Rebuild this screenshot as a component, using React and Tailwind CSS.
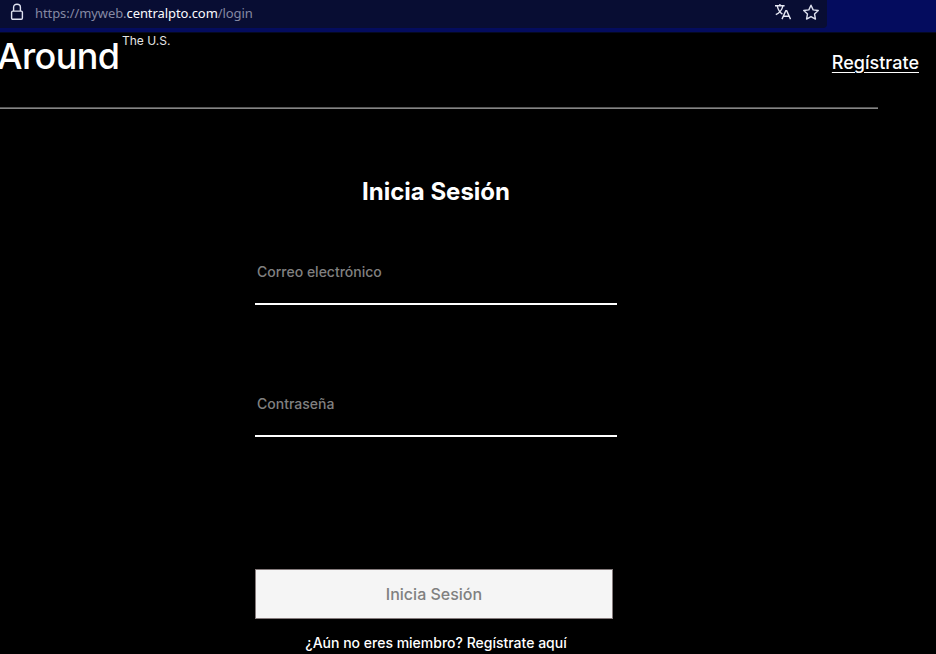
function LockIcon() {
  return (
    <svg className="h-[18px] w-[14px] shrink-0" viewBox="0 0 14 18" fill="none" stroke="#dfe2f0" strokeWidth="1.4">
      <rect x="1.6" y="8.1" width="10.8" height="8.2" rx="1.2" />
      <path d="M3.6 8V4.3C3.6 2.5 5 1.3 7 1.3s3.4 1.2 3.4 3V8" />
    </svg>
  );
}

function TranslateIcon() {
  return (
    <svg className="h-4 w-4 shrink-0" viewBox="0 0 16 16" fill="none" stroke="#e6e8f4" strokeWidth="1.4">
      <path d="M0 1.7h9.6M4.9 0v1.7M2.3 2.4C3.2 5.8 5 8.6 7.4 10.2M7.8 2.4C6.8 6.2 4.6 9 0.8 10.7" />
      <path d="M7 15.1L10.8 6.6h.9l3.8 8.5M8.5 12.2h5.6" />
    </svg>
  );
}

function StarIcon() {
  return (
    <svg className="h-[17px] w-[17px] shrink-0" viewBox="0 0 17 17" fill="none" stroke="#dfe2f0" strokeWidth="1.4" strokeLinejoin="round">
      <path d="M8 1.2l2.15 4.65 5.1.62-3.75 3.5.95 5.05L8 12.52l-4.45 2.5.95-5.05-3.75-3.5 5.1-.62z" />
    </svg>
  );
}

function AddressBar() {
  return (
    <div className="h-[33px] border-b border-[#050920] bg-[#040c5e]">
      <div className="flex h-7 w-[827px] items-start rounded-br bg-[#080d33] pl-[10px]">
        <div className="pt-[3px]"><LockIcon /></div>
        <div className="ml-[11px] flex-1 pt-1 font-['Noto_Sans','Open_Sans',sans-serif] text-[13px] leading-[18px] tracking-[-0.08px] whitespace-nowrap text-[#8589a3]">
          https://myweb.<span className="text-[#fbfbfe]">centralpto.com</span>/login
        </div>
        <div className="flex gap-3 pt-1 pr-[7px]">
          <TranslateIcon />
          <StarIcon />
        </div>
      </div>
    </div>
  );
}

function Field({ label, type }) {
  return (
    <input
      type={type}
      placeholder={label}
      className="block h-[65px] w-[362px] border-b-2 border-white bg-transparent px-[2px] text-sm font-medium text-white outline-none placeholder:text-[#808080]"
    />
  );
}

export default function App() {
  return (
    <div className="h-[654px] w-[936px] overflow-hidden bg-black font-['Inter',sans-serif] text-white">
      <AddressBar />
      <header className="flex h-[74px] items-start">
        <div className="-ml-[3px] w-[122px] pt-[1px] text-[36px] leading-[44px] font-[450] tracking-[-0.6px]">Around</div>
        <div className="ml-[3px] pt-px text-xs leading-[14px] text-[#e6e6e6]">The U.S.</div>
        <a href="#registro" className="mt-[19px] mr-[17px] ml-auto text-lg leading-[22px] font-medium underline underline-offset-[3px]">Regístrate</a>
      </header>
      <div className="h-[2px] w-[878px] border-t border-[#565656] bg-[#858585]" />
      <form className="ml-[255px] flex w-[362px] flex-col">
        <h1 className="mt-[68px] text-center text-2xl leading-[30px] font-bold">Inicia Sesión</h1>
        <div className="mt-[33px]"><Field label="Correo electrónico" type="email" /></div>
        <div className="mt-[67px]"><Field label="Contraseña" type="password" /></div>
        <button type="button" className="mt-[132px] h-[50px] w-[358px] border border-[#857b7c] bg-[#f5f5f5] text-base font-medium text-[#808080]">Inicia Sesión</button>
        <p className="mt-[15px] text-center text-sm leading-[18px] font-medium">¿Aún no eres miembro? Regístrate aquí</p>
      </form>
    </div>
  );
}
